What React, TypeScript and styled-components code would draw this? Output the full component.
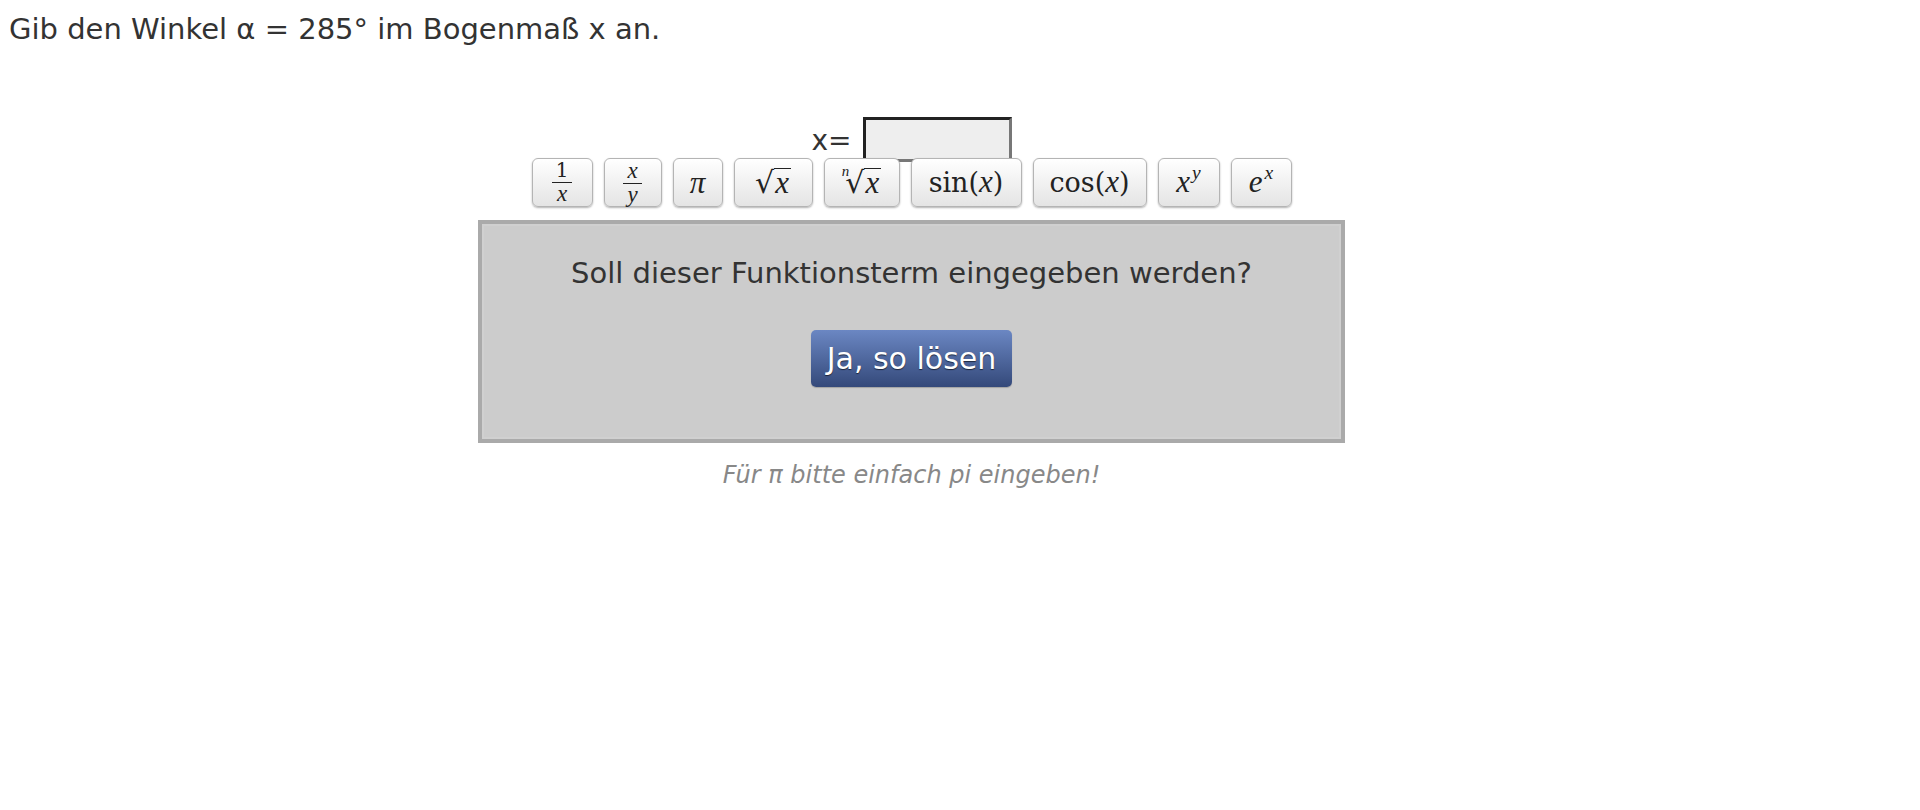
import React from "react";
import styled, { createGlobalStyle } from "styled-components";

const Global = createGlobalStyle`
  body {
    margin: 8px;
    background: #fff;
    font-family: "DejaVu Sans", Verdana, sans-serif;
    color: #333;
  }
`;

const Title = styled.div`
  font-size: 29px;
  line-height: 34px;
  padding-top: 4px;
  margin-left: 1px;
`;

const Main = styled.div`
  width: 1807px;
  display: flex;
  flex-direction: column;
  align-items: center;
`;

const InputRow = styled.div`
  margin-top: 71px;
  display: flex;
  align-items: flex-end;
  height: 45px;
`;

const Label = styled.span`
  font-size: 28px;
  line-height: 32px;
  margin-right: 11px;
  margin-bottom: 5px;
`;

const AnswerInput = styled.input`
  box-sizing: border-box;
  width: 149px;
  height: 45px;
  background: #eee;
  border-style: solid;
  border-width: 3px;
  border-color: #222 #777 #777 #222;
  padding: 0 6px;
  outline: none;
  font-size: 22px;
`;

const ButtonRow = styled.div`
  margin-top: -4px;
  display: flex;
  gap: 11px;
  position: relative;
  z-index: 1;
`;

const MathButton = styled.button<{ $w: number }>`
  box-sizing: border-box;
  width: ${(p) => p.$w}px;
  height: 49px;
  padding: 0;
  border: 1px solid #b4b4b4;
  border-radius: 6px;
  background: linear-gradient(#ffffff, #e4e4e4);
  box-shadow: 0 1px 2px rgba(0, 0, 0, 0.3);
  display: flex;
  align-items: center;
  justify-content: center;
  font-family: "DejaVu Serif", "Liberation Serif", serif;
  font-size: 27px;
  line-height: 32px;
  color: #222;
  cursor: pointer;
`;

const V = styled.i`
  font-family: "Liberation Serif", "DejaVu Serif", serif;
  font-style: italic;
  font-size: 1.15em;
`;

const Frac = styled.span`
  display: inline-flex;
  flex-direction: column;
  align-items: center;
  font-size: 20px;
  line-height: 19px;
`;

const Num = styled.span`
  padding: 0 4px 2px;
  border-bottom: 1.5px solid #222;
`;

const Den = styled.span`
  padding-top: 1px;
`;

const Sup = styled.sup`
  font-size: 17px;
  vertical-align: 13px;
  line-height: 0;
  margin-left: 2px;
`;

const Radical = styled.span`
  display: inline-flex;
  align-items: flex-end;
`;

const RootIndex = styled.span`
  align-self: flex-start;
  font-size: 13px;
  line-height: 13px;
  margin-right: -4px;
  margin-top: -2px;
`;

const RadSign = styled.span`
  font-size: 30px;
  line-height: 32px;
`;

const Radicand = styled.span`
  border-top: 1.5px solid #222;
  line-height: 28px;
  padding: 0 2px 0 1px;
  margin-bottom: 1px;
`;

const Box = styled.div`
  box-sizing: border-box;
  margin-top: 13px;
  width: 867px;
  height: 223px;
  background: #ccc;
  border: 4px solid #aaa;
  box-shadow: inset 0 0 0 2px #d0d0d0;
  display: flex;
  flex-direction: column;
  align-items: center;
`;

const Question = styled.div`
  font-size: 29px;
  line-height: 34px;
  margin-top: 32px;
  color: #333;
`;

const SolveButton = styled.button`
  margin-top: 40px;
  box-sizing: border-box;
  width: 201px;
  height: 57px;
  padding: 0;
  border: none;
  border-radius: 5px;
  background: linear-gradient(#6b87c3, #34497a);
  color: #fff;
  font-family: "DejaVu Sans", Verdana, sans-serif;
  font-size: 30px;
  text-shadow: 0 1px 1px rgba(0, 0, 0, 0.6);
  box-shadow: 0 1px 1px rgba(0, 0, 0, 0.2);
  cursor: pointer;
`;

const Hint = styled.div`
  margin-top: 18px;
  font-size: 24px;
  line-height: 28px;
  font-style: italic;
  color: #888;
`;

export default function App() {
  return (
    <>
      <Global />
      <Title>Gib den Winkel α = 285° im Bogenmaß x an.</Title>
      <Main>
        <InputRow>
          <Label>x=</Label>
          <AnswerInput type="text" />
        </InputRow>
        <ButtonRow>
          <MathButton $w={61}>
            <Frac>
              <Num>1</Num>
              <Den>
                <V>x</V>
              </Den>
            </Frac>
          </MathButton>
          <MathButton $w={58}>
            <Frac>
              <Num>
                <V>x</V>
              </Num>
              <Den>
                <V>y</V>
              </Den>
            </Frac>
          </MathButton>
          <MathButton $w={50}>
            <V>π</V>
          </MathButton>
          <MathButton $w={79}>
            <Radical>
              <RadSign>√</RadSign>
              <Radicand>
                <V>x</V>
              </Radicand>
            </Radical>
          </MathButton>
          <MathButton $w={76}>
            <Radical>
              <RootIndex>
                <V>n</V>
              </RootIndex>
              <RadSign>√</RadSign>
              <Radicand>
                <V>x</V>
              </Radicand>
            </Radical>
          </MathButton>
          <MathButton $w={111}>
            <span>
              sin(<V>x</V>)
            </span>
          </MathButton>
          <MathButton $w={114}>
            <span>
              cos(<V>x</V>)
            </span>
          </MathButton>
          <MathButton $w={62}>
            <span>
              <V>x</V>
              <Sup>
                <V>y</V>
              </Sup>
            </span>
          </MathButton>
          <MathButton $w={61}>
            <span>
              <V>e</V>
              <Sup>
                <V>x</V>
              </Sup>
            </span>
          </MathButton>
        </ButtonRow>
        <Box>
          <Question>Soll dieser Funktionsterm eingegeben werden?</Question>
          <SolveButton>Ja, so lösen</SolveButton>
        </Box>
        <Hint>Für π bitte einfach pi eingeben!</Hint>
      </Main>
    </>
  );
}
